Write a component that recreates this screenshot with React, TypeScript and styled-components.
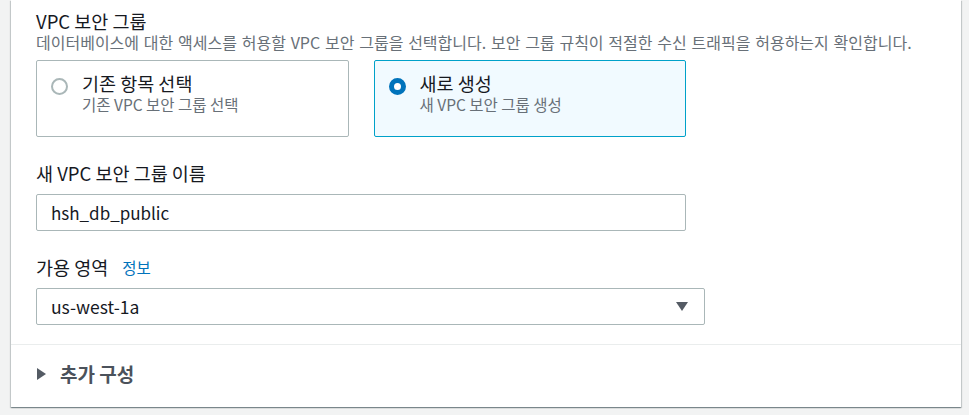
import React from 'react';
import styled, { createGlobalStyle } from 'styled-components';

const GlobalStyle = createGlobalStyle`
	html, body {
		margin: 0;
		padding: 0;
		background: #f2f3f3;
	}
	body {
		font-family: 'Noto Sans CJK KR', 'Noto Sans', sans-serif;
		color: #16191f;
	}
	* {
		box-sizing: border-box;
	}
`;

const Page = styled.div`
	padding: 0 8px 8px 11px;
`;

const Container = styled.div`
	background: #ffffff;
	height: 407px;
	display: flex;
	flex-direction: column;
	box-shadow: 0 1px 1px 0 rgba(0, 28, 36, 0.3), 1px 1px 1px 0 rgba(0, 28, 36, 0.15),
		-1px 1px 1px 0 rgba(0, 28, 36, 0.15);
`;

const Body = styled.div`
	padding: 10px 25px 19px;
	border-bottom: 1px solid #eaeded;
`;

const Field = styled.div`
	width: 650px;
	& + & {
		margin-top: 25px;
	}
`;

const Label = styled.div<{ $tight?: boolean }>`
	display: flex;
	align-items: center;
	gap: 14px;
	height: 22px;
	font-size: 18.5px;
	line-height: 22px;
	color: #16191f;
	margin-bottom: ${(p) => (p.$tight ? 0 : 10)}px;
`;

const Description = styled.div`
	font-size: 16px;
	line-height: 20px;
	color: #687078;
	margin-bottom: 8px;
	white-space: nowrap;
	word-spacing: 1.2px;
`;

const InfoLink = styled.a`
	font-size: 15.5px;
	line-height: 22px;
	color: #0073bb;
	text-decoration: none;
`;

const Tiles = styled.div`
	display: grid;
	grid-template-columns: 1fr 1fr;
	gap: 25px;
`;

const Tile = styled.div<{ $checked?: boolean }>`
	display: flex;
	gap: 14px;
	height: 77px;
	padding: 11px 14px 0;
	border: 1px solid ${(p) => (p.$checked ? '#00a1c9' : '#aab7b8')};
	background: ${(p) => (p.$checked ? '#f1faff' : '#ffffff')};
	border-radius: 2px;
`;

const Radio = styled.span<{ $checked?: boolean }>`
	flex: none;
	width: 17px;
	height: 17px;
	margin-top: 6px;
	border-radius: 50%;
	background: #ffffff;
	border: ${(p) => (p.$checked ? '5px solid #0073bb' : '2px solid #aab7b8')};
`;

const TileText = styled.div`
	display: flex;
	flex-direction: column;
`;

const TileTitle = styled.div`
	font-size: 18.5px;
	line-height: 22px;
	color: #16191f;
`;

const TileSub = styled.div`
	font-size: 15.5px;
	line-height: 20px;
	color: #687078;
`;

const Input = styled.div<{ $size?: number }>`
	height: 37px;
	display: flex;
	align-items: center;
	padding: 0 14px;
	border: 1px solid #aab7b8;
	border-radius: 2px;
	font-size: ${(p) => p.$size ?? 17.5}px;
	color: #16191f;
`;

const Select = styled(Input)`
	width: 669px;
	justify-content: space-between;
	padding-right: 16px;
`;

const Caret = styled.span<{ $dir: 'down' | 'right' }>`
	flex: none;
	width: 0;
	height: 0;
	border-style: solid;
	border-color: transparent;
	${(p) =>
		p.$dir === 'down'
			? 'border-width: 9px 6px 0 6px; border-top-color: #545b64;'
			: 'border-width: 6px 0 6px 9px; border-left-color: #545b64;'}
`;

const Footer = styled.div`
	display: flex;
	align-items: flex-start;
	padding: 18px 26px 0;
	height: 62px;
`;

const FooterTitle = styled.div`
	display: flex;
	align-items: center;
	gap: 14px;
	font-size: 19px;
	line-height: 22px;
	font-weight: 700;
	color: #4b525b;
`;

function App() {
	return (
		<>
			<GlobalStyle />
			<Page>
				<Container>
					<Body>
						<Field>
							<Label $tight>VPC 보안 그룹</Label>
							<Description>
								데이터베이스에 대한 액세스를 허용할 VPC 보안 그룹을 선택합니다. 보안 그룹 규칙이 적절한 수신 트래픽을 허용하는지 확인합니다.
							</Description>
							<Tiles>
								<Tile>
									<Radio />
									<TileText>
										<TileTitle>기존 항목 선택</TileTitle>
										<TileSub>기존 VPC 보안 그룹 선택</TileSub>
									</TileText>
								</Tile>
								<Tile $checked>
									<Radio $checked />
									<TileText>
										<TileTitle>새로 생성</TileTitle>
										<TileSub>새 VPC 보안 그룹 생성</TileSub>
									</TileText>
								</Tile>
							</Tiles>
						</Field>
						<Field>
							<Label>새 VPC 보안 그룹 이름</Label>
							<Input $size={17}>hsh_db_public</Input>
						</Field>
						<Field>
							<Label>
								가용 영역 <InfoLink href="#">정보</InfoLink>
							</Label>
							<Select>
								us-west-1a
								<Caret $dir="down" />
							</Select>
						</Field>
					</Body>
					<Footer>
						<FooterTitle>
							<Caret $dir="right" />
							추가 구성
						</FooterTitle>
					</Footer>
				</Container>
			</Page>
		</>
	);
}

export default App;
